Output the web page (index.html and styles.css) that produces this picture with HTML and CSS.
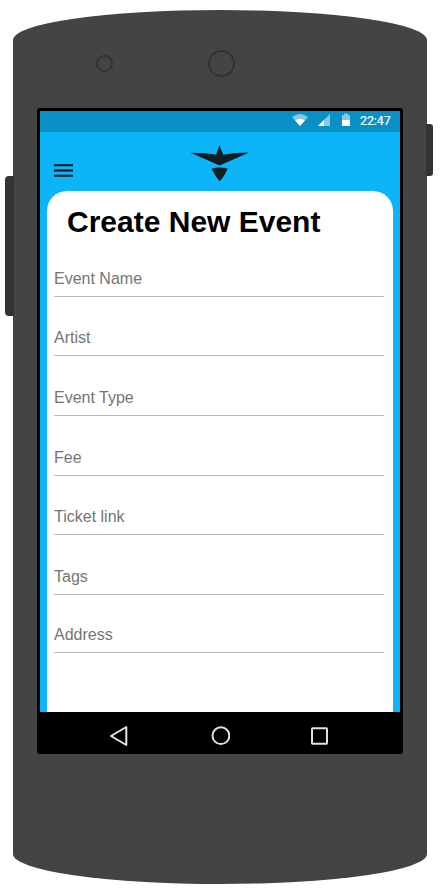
FILE: index.html
```html
<!DOCTYPE html>
<html lang="en">
<head>
<meta charset="utf-8">
<title>Create New Event</title>
<link rel="stylesheet" href="styles.css">
</head>
<body>
<div class="phone">
  <span class="side-button side-button-left"></span>
  <span class="side-button side-button-right"></span>
  <div class="sensors">
    <span class="sensor"></span>
    <span class="speaker"></span>
  </div>
  <div class="screen">
    <div class="status-bar">
      <svg class="status-icons" width="60" height="14" viewBox="0 0 60 14">
        <path fill="#84c8e3" d="M0 4Q8 -2 16 4L8 13Z"/>
        <path fill="#fff" d="M3.2 7.5Q8 4 12.8 7.5L8 13Z"/>
        <path fill="#84c8e3" d="M26 13L38 1V13Z"/>
        <path fill="#fff" d="M26 13L32 7V13Z"/>
        <path fill="#84c8e3" d="M50 2H52V.5H56V2H58V7H50Z"/>
        <path fill="#fff" d="M50 7H58V13H50Z"/>
      </svg>
      <span class="clock">22:47</span>
    </div>
    <header class="app-header">
      <svg class="menu" width="19" height="13" viewBox="0 0 19 13">
        <path d="M0 1.2H19M0 6.5H19M0 11.8H19" stroke="#06141b" stroke-width="2.1"/>
      </svg>
      <svg class="logo" width="60" height="38" viewBox="0 0 60 38">
        <path fill="#101e23" d="M.7 8.8L14 9.2Q22 9.8 26 10.8L29.5 1.2L33.2 10.8Q40 9.6 46 9L59 8.5L29.6 21.6Z"/>
        <path fill="#101e23" d="M21.7 24.4Q29.5 22.4 37.5 24.4Q36 29.5 29.7 37.6Q23.5 29.5 21.7 24.4Z"/>
      </svg>
    </header>
    <main class="card">
      <h1>Create New Event</h1>
      <form>
        <input class="field" type="text" placeholder="Event Name">
        <input class="field short" type="text" placeholder="Artist">
        <input class="field" type="text" placeholder="Event Type">
        <input class="field" type="text" placeholder="Fee">
        <input class="field short" type="text" placeholder="Ticket link">
        <input class="field" type="text" placeholder="Tags">
        <input class="field shorter" type="text" placeholder="Address">
      </form>
    </main>
    <nav class="nav-bar">
      <svg width="20" height="22" viewBox="0 0 20 22"><path d="M17.3 2V20L2 11Z"/></svg>
      <svg width="20" height="22" viewBox="0 0 20 22"><circle cx="10.9" cy="10.7" r="8.4"/></svg>
      <svg width="20" height="22" viewBox="0 0 20 22"><rect x="2" y="3.3" width="15" height="15.4" rx=".6"/></svg>
    </nav>
  </div>
</div>
</body>
</html>
```
FILE: styles.css
```css
* { box-sizing: border-box; }

body {
  margin: 0;
  padding: 10px 0 0 13px;
  background: #fff;
  font-family: "Liberation Sans", Arial, sans-serif;
}

.phone {
  position: relative;
  width: 414px;
  height: 874px;
  padding: 0 24px;
  background: #444;
  border-radius: 50% / 30px;
}

.side-button {
  position: absolute;
  background: #333;
}

.side-button-left {
  left: -8px;
  top: 166px;
  width: 9px;
  height: 140px;
  border-radius: 4px 0 0 4px;
}

.side-button-right {
  right: -6px;
  top: 114px;
  width: 7px;
  height: 52px;
  border-radius: 0 3px 3px 0;
}

.sensors {
  display: flex;
  align-items: center;
  gap: 95px;
  height: 98px;
  padding: 9px 0 0 59px;
}

.sensor,
.speaker {
  border: 2px solid #333;
  border-radius: 50%;
}

.sensor { width: 17px; height: 17px; }
.speaker { width: 27px; height: 27px; }

.screen {
  display: flex;
  flex-direction: column;
  width: 366px;
  height: 646px;
  overflow: hidden;
  border: 3px solid #000;
  border-radius: 3px;
  background: #0bb5f7;
}

.status-bar {
  display: flex;
  flex: none;
  justify-content: flex-end;
  height: 21px;
  padding: 2px 10px 0 0;
  background: #0991c6;
}

.clock {
  width: 30px;
  margin-left: 8px;
  color: #fff;
  font: 400 12.3px/16px Roboto, sans-serif;
  -webkit-text-stroke: .2px #fff;
}

.app-header {
  display: flex;
  flex: none;
  height: 59px;
  padding: 12px 0 0 14px;
}

.menu { margin-top: 20px; }
.logo { margin-left: 117px; }

.card {
  flex: 1;
  margin: 0 7px;
  padding: 14px 9px 0 7px;
  background: #fff;
  border-radius: 20px 20px 0 0;
}

h1 {
  margin: 0 0 22px 13px;
  font-size: 30px;
  line-height: 34px;
}

form {
  display: flex;
  flex-direction: column;
}

.field {
  width: 330px;
  height: 36px;
  margin-bottom: 24px;
  padding: 0;
  border: 0;
  border-bottom: 1px solid #b9b9b9;
  background: transparent;
  font: 16px "Liberation Sans", Arial, sans-serif;
}

.field::placeholder { color: #757575; opacity: 1; }
.short { margin-top: -1px; }
.shorter { margin-top: -2px; }

.nav-bar {
  display: flex;
  flex: none;
  justify-content: space-between;
  height: 39px;
  padding: 13px 70px 0 69px;
  background: #000;
}

.nav-bar svg {
  fill: none;
  stroke: #e2e2e2;
  stroke-width: 2;
  stroke-linejoin: round;
}
```
